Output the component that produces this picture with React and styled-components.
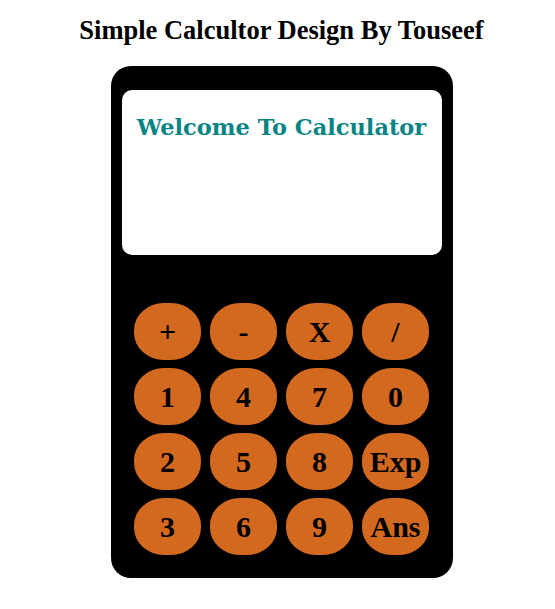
import React from 'react';
import styled, { createGlobalStyle } from 'styled-components';

const GlobalStyle = createGlobalStyle`
  body {
    margin: 8px 0 8px 8px;
    background: #fff;
    font-family: 'Liberation Serif', 'Times New Roman', serif;
  }
`;

const Page = styled.div`
  display: flex;
  flex-direction: column;
  align-items: center;
`;

const Heading = styled.h2`
  margin: 7px 0 0;
  font-size: 26.5px;
  font-weight: bold;
  color: #000;
  text-align: center;
`;

const Body = styled.div`
  width: 342px;
  margin-top: 20px;
  padding: 24px 11px 23px;
  box-sizing: border-box;
  background: #000;
  border-radius: 20px;
`;

const Screen = styled.div`
  height: 165px;
  background: #fff;
  border-radius: 10px;
  display: flex;
  justify-content: center;
  padding-top: 24px;
  box-sizing: border-box;
`;

const Welcome = styled.h3`
  margin: 0;
  font-family: 'DejaVu Serif', Georgia, serif;
  font-size: 22.5px;
  font-weight: bold;
  color: #088484;
`;

const Keys = styled.div`
  display: grid;
  grid-template-columns: repeat(4, 67px);
  grid-auto-rows: 57px;
  column-gap: 9px;
  row-gap: 8px;
  justify-content: center;
  margin-top: 48px;
`;

const Key = styled.button`
  border: none;
  padding: 0;
  border-radius: 30px / 27px;
  background: #d2691e;
  color: #000;
  font-family: 'Liberation Serif', 'Times New Roman', serif;
  font-size: 30px;
  font-weight: bold;
  cursor: pointer;
`;

const keys = ['+', '-', 'X', '/', '1', '4', '7', '0', '2', '5', '8', 'Exp', '3', '6', '9', 'Ans'];

export default function App() {
  return (
    <Page>
      <GlobalStyle />
      <Heading>Simple Calcultor Design By Touseef</Heading>
      <Body>
        <Screen>
          <Welcome>Welcome To Calculator</Welcome>
        </Screen>
        <Keys>
          {keys.map((k) => (
            <Key key={k}>{k}</Key>
          ))}
        </Keys>
      </Body>
    </Page>
  );
}
